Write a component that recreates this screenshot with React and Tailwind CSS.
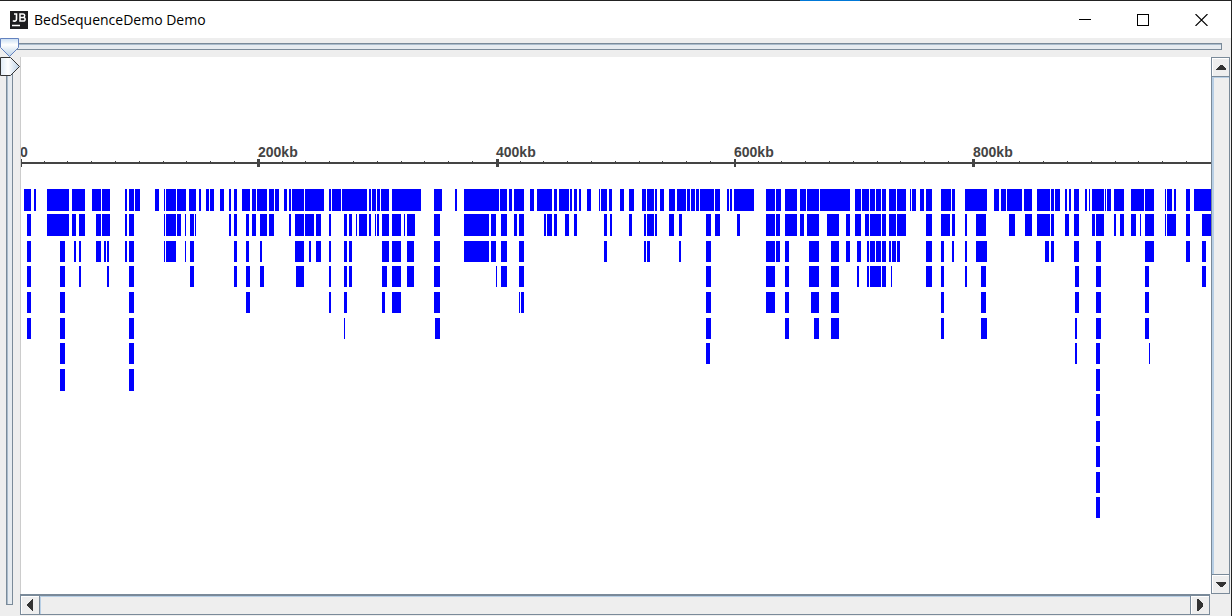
import React, { useState } from 'react'

// [start, end] of every feature, one list per packed row
const rows = [
  {
    y: 132, h: 22, spans: [
      [3, 10], [13, 15], [26, 48], [51, 64], [71, 80], [81, 89], [104, 106], [108, 113], [114, 119],
      [134, 138], [143, 144], [145, 155], [156, 165], [168, 175], [178, 180], [185, 188], [189, 193],
      [199, 203], [208, 210], [213, 216], [221, 229], [231, 235], [236, 246], [248, 253], [254, 258],
      [263, 266], [268, 270], [271, 283], [284, 303], [308, 310], [311, 320], [321, 346], [348, 350],
      [351, 355], [356, 359], [360, 368], [371, 400], [413, 421], [434, 436], [443, 478], [479, 486],
      [488, 491], [493, 503], [509, 513], [516, 531], [533, 536], [538, 548], [549, 551], [553, 556],
      [558, 560], [566, 570], [578, 579], [580, 586], [588, 591], [599, 603], [608, 613], [621, 625],
      [626, 633], [634, 636], [639, 643], [648, 654], [656, 665], [666, 669], [670, 674], [675, 678],
      [679, 693], [694, 699], [706, 708], [709, 711], [713, 733], [745, 754], [755, 760], [764, 776],
      [779, 785], [786, 798], [799, 829], [834, 840], [841, 848], [849, 854], [855, 860], [861, 865],
      [868, 875], [876, 885], [889, 890], [891, 895], [899, 903], [905, 911], [920, 930], [931, 934],
      [944, 966], [973, 978], [980, 985], [986, 1001], [1003, 1011], [1016, 1029], [1030, 1033],
      [1034, 1039], [1044, 1046], [1048, 1050], [1053, 1058], [1064, 1066], [1068, 1069], [1071, 1083],
      [1084, 1085], [1086, 1090], [1093, 1103], [1110, 1123], [1124, 1133], [1144, 1145], [1146, 1151],
      [1153, 1155], [1165, 1169], [1173, 1190]
    ]
  },
  {
    y: 157, h: 22, spans: [
      [6, 10], [26, 48], [51, 55], [58, 64], [75, 80], [81, 89], [104, 106], [108, 113], [143, 144],
      [145, 155], [156, 160], [164, 165], [169, 173], [174, 175], [208, 210], [213, 216], [225, 228],
      [231, 235], [239, 246], [248, 253], [268, 270], [274, 283], [284, 293], [295, 300], [308, 310],
      [323, 326], [328, 331], [335, 336], [338, 346], [348, 350], [354, 355], [356, 358], [361, 368],
      [371, 380], [383, 384], [386, 394], [413, 419], [443, 468], [470, 475], [480, 486], [493, 496],
      [498, 503], [523, 525], [526, 531], [533, 536], [544, 548], [553, 556], [583, 586], [589, 591],
      [608, 611], [623, 625], [626, 633], [634, 636], [648, 653], [658, 661], [685, 690], [694, 699],
      [716, 719], [745, 754], [755, 759], [764, 776], [779, 783], [786, 798], [806, 818], [825, 829],
      [834, 840], [844, 848], [849, 860], [861, 865], [868, 875], [876, 885], [905, 911], [920, 929],
      [931, 934], [944, 946], [955, 965], [988, 994], [1004, 1011], [1016, 1029], [1030, 1033],
      [1044, 1048], [1053, 1058], [1071, 1074], [1075, 1083], [1093, 1095], [1099, 1103], [1110, 1115],
      [1119, 1120], [1124, 1133], [1144, 1145], [1146, 1155], [1165, 1169], [1181, 1190]
    ]
  },
  {
    y: 184, h: 21, spans: [
      [6, 10], [39, 44], [53, 55], [58, 60], [75, 80], [83, 85], [86, 88], [104, 106], [108, 113],
      [143, 144], [145, 155], [164, 165], [169, 173], [213, 216], [225, 228], [239, 241], [274, 283],
      [288, 290], [295, 300], [308, 310], [323, 326], [328, 331], [361, 368], [371, 380], [386, 393],
      [413, 419], [443, 468], [470, 475], [480, 486], [498, 503], [583, 586], [623, 625], [626, 629],
      [658, 660], [685, 690], [745, 754], [755, 759], [764, 768], [788, 798], [810, 818], [825, 829],
      [836, 840], [846, 848], [849, 854], [855, 860], [861, 865], [868, 870], [871, 875], [876, 879],
      [905, 911], [920, 923], [931, 933], [944, 946], [955, 966], [1024, 1028], [1030, 1033],
      [1053, 1058], [1075, 1080], [1124, 1133], [1165, 1169], [1181, 1185]
    ]
  },
  {
    y: 209, h: 21, spans: [
      [6, 10], [39, 44], [58, 60], [86, 88], [108, 113], [169, 173], [213, 216], [225, 229], [239, 243],
      [275, 283], [308, 310], [323, 326], [328, 331], [361, 366], [371, 380], [386, 393], [413, 419],
      [475, 476], [480, 486], [498, 503], [685, 690], [745, 754], [764, 768], [788, 798], [810, 818],
      [836, 838], [846, 848], [849, 860], [861, 865], [870, 871], [905, 911], [920, 923], [944, 946],
      [960, 965], [1054, 1058], [1075, 1080], [1124, 1128], [1181, 1185]
    ]
  },
  {
    y: 235, h: 21, spans: [
      [6, 10], [39, 44], [108, 113], [225, 229], [308, 310], [323, 326], [361, 364], [371, 380],
      [413, 419], [498, 499], [500, 503], [685, 690], [745, 754], [764, 768], [790, 798], [810, 818],
      [920, 923], [960, 965], [1054, 1058], [1075, 1080], [1124, 1128]
    ]
  },
  {
    y: 261, h: 21, spans: [
      [6, 10], [39, 44], [108, 113], [323, 324], [414, 419], [685, 690], [764, 768], [793, 798],
      [810, 818], [920, 923], [960, 966], [1054, 1056], [1075, 1080], [1124, 1128]
    ]
  },
  { y: 286, h: 21, spans: [[39, 44], [108, 113], [685, 689], [1054, 1056], [1075, 1079], [1128, 1129]] },
  { y: 312, h: 22, spans: [[39, 44], [108, 113], [1075, 1079]] },
  { y: 337, h: 22, spans: [[1075, 1079]] },
  { y: 364, h: 21, spans: [[1075, 1079]] },
  { y: 389, h: 21, spans: [[1075, 1079]] },
  { y: 415, h: 21, spans: [[1075, 1079]] },
  { y: 440, h: 21, spans: [[1075, 1079]] }
]

const majorTicks = [
  { label: '0', x: 0, w: 1, textX: -1 },
  { label: '200kb', x: 236, w: 3, textX: 237 },
  { label: '400kb', x: 475, w: 3, textX: 475 },
  { label: '600kb', x: 713, w: 2, textX: 713 },
  { label: '800kb', x: 951, w: 3, textX: 952 }
]

const minorTicks = Array.from({ length: 49 }, (_, i) => Math.floor((i + 1) * 23.8 - 0.8))

const TitleBar = () => (
  <header className="flex h-[37px] shrink-0 items-center bg-white pl-[10px]">
    <svg width="18" height="18" viewBox="0 0 18 18" className="shrink-0" aria-hidden="true">
      <rect width="18" height="18" fill="#1c1c1e" />
      <path d="M3 9.5c.5 .8 3.5 1.2 3.5-1.2V3H4" fill="none" stroke="#fff" strokeWidth="1.6" />
      <path d="M10 3v7h3.2c2.6 0 2.6-3.6 0-3.6H10h3c2.2 0 2.2-3.4 0-3.4z" fill="none" stroke="#fff" strokeWidth="1.5" />
      <path d="M2 14.5h8" stroke="#fff" strokeWidth="1.5" />
    </svg>
    <h1 className="ml-1.5 flex-1 font-['Open_Sans','Noto_Sans',sans-serif] text-sm text-black">
      BedSequenceDemo Demo
    </h1>
    <button type="button" aria-label="Minimize" className="flex h-full w-[58px] items-center justify-center">
      <svg width="12" height="12" shapeRendering="crispEdges"><path d="M0 5.5h12" stroke="#000" /></svg>
    </button>
    <button type="button" aria-label="Maximize" className="flex h-full w-[58px] items-center justify-center">
      <svg width="12" height="12" shapeRendering="crispEdges"><rect x=".5" y=".5" width="11" height="11" fill="none" stroke="#000" /></svg>
    </button>
    <button type="button" aria-label="Close" className="flex h-full w-[59px] items-center justify-center">
      <svg width="13" height="12"><path d="M.5 0l12 12M12.5 0l-12 12" stroke="#000" strokeWidth="1.1" /></svg>
    </button>
  </header>
)

const HorizontalSlider = () => {
  const [value, setValue] = useState(0)
  return (
    <div className="relative flex h-[19px] shrink-0 items-start px-[9px] pt-[5px]">
      <div className="h-[7px] flex-1 border border-[#7a8a99] bg-[#e6ebf0] shadow-[inset_0_1px_0_#a9bbcb]" />
      <svg width="20" height="19" className="absolute top-0 left-0" aria-hidden="true">
        <defs>
          <linearGradient id="thumbDown" x1="0" y1="0" x2="0" y2="1">
            <stop offset="0" stopColor="#c8ddf2" />
            <stop offset=".35" stopColor="#fff" />
            <stop offset="1" stopColor="#b8cfe5" />
          </linearGradient>
        </defs>
        <path d="M.5 .5h18v9l-9 9l-9-9z" fill="url(#thumbDown)" stroke="#6382bf" />
      </svg>
      <input
        type="range"
        aria-label="Zoom horizontally"
        value={value}
        onChange={e => setValue(Number(e.target.value))}
        className="absolute inset-0 m-0 h-full w-full opacity-0"
      />
    </div>
  )
}

const VerticalSlider = () => {
  const [value, setValue] = useState(0)
  return (
    <div className="relative flex w-5 shrink-0 flex-col pt-[9px] pb-[11px] pl-[6px]">
      <div className="w-[7px] flex-1 border border-[#7a8a99] bg-[#e6ebf0] shadow-[inset_1px_0_0_#a9bbcb]" />
      <svg width="20" height="19" className="absolute top-0 left-0" aria-hidden="true">
        <defs>
          <linearGradient id="thumbRight" x1="0" y1="0" x2="1" y2="0">
            <stop offset="0" stopColor="#dfeaf5" />
            <stop offset=".4" stopColor="#fff" />
            <stop offset="1" stopColor="#b8cfe5" />
          </linearGradient>
        </defs>
        <path d="M.5 .5h10l9 9l-9 9h-10z" fill="url(#thumbRight)" stroke="#333" />
      </svg>
      <input
        type="range"
        aria-label="Zoom vertically"
        value={value}
        onChange={e => setValue(Number(e.target.value))}
        className="absolute inset-0 m-0 h-full w-full opacity-0 [writing-mode:vertical-lr]"
      />
    </div>
  )
}

const SequenceTrack = () => (
  <svg className="block h-full w-full overflow-hidden bg-white" shapeRendering="crispEdges">
    <rect x="0" y="105" width="100%" height="2" fill="#444" />
    {minorTicks.map(x => (
      <rect key={x} x={x} y="104" width="1" height="1" fill="#444" />
    ))}
    {majorTicks.map(tick => (
      <g key={tick.label} fill="#444">
        <rect x={tick.x} y="102" width={tick.w} height="8" />
        <text x={tick.textX} y="100" className="font-['Liberation_Sans',Arial,sans-serif] text-[14px] font-bold">
          {tick.label}
        </text>
      </g>
    ))}
    {rows.map(row => (
      <g key={row.y} fill="#0000ff">
        {row.spans.map(([start, end]) => (
          <rect key={start} x={start} y={row.y} width={end - start} height={row.h} />
        ))}
      </g>
    ))}
  </svg>
)

const VerticalScrollbar = () => (
  <div className="flex w-5 shrink-0 flex-col border-l border-[#7a8a99] bg-[#eee]">
    <button type="button" aria-label="Scroll up" className="flex h-[19px] w-[18px] items-center justify-center border-t border-r border-[#7a8a99] pl-px shadow-[inset_1px_1px_0_#fff]">
      <svg width="10" height="5" shapeRendering="crispEdges"><path d="M4 0h2l4 4v1H0V4z" fill="#333" /></svg>
    </button>
    <div className="w-[18px] flex-1 border-t border-r border-[#7a8a99] shadow-[inset_2px_1px_0_#b8cfe5]" />
    <button type="button" aria-label="Scroll down" className="flex h-5 w-[18px] items-center justify-center border-t border-r border-b border-[#7a8a99] pl-px shadow-[inset_1px_1px_0_#fff]">
      <svg width="10" height="5" shapeRendering="crispEdges"><path d="M0 0h10v1L6 5H4L0 1z" fill="#333" /></svg>
    </button>
  </div>
)

const HorizontalScrollbar = () => (
  <div className="flex h-[22px] min-w-0 flex-1 border-t-2 border-[#7a8a99] bg-[#eee]">
    <button type="button" aria-label="Scroll left" className="flex h-[19px] w-[19px] items-center justify-center border-b border-l border-[#7a8a99] shadow-[inset_1px_1px_0_#fff]">
      <svg width="6" height="12" shapeRendering="crispEdges"><path d="M6 0v12H5L0 7V5l5-5z" fill="#333" /></svg>
    </button>
    <div className="h-[19px] flex-1 border-b border-l border-[#7a8a99] shadow-[inset_1px_1px_0_#b8cfe5]" />
    <button type="button" aria-label="Scroll right" className="flex h-[19px] w-5 items-center justify-center border-r border-b border-l border-[#7a8a99] shadow-[inset_1px_1px_0_#fff]">
      <svg width="6" height="12" shapeRendering="crispEdges"><path d="M0 0v12h1l5-5V5L1 0z" fill="#333" /></svg>
    </button>
  </div>
)

const App = () => {
  return (
    <div className="flex h-screen flex-col border-r border-[#222] bg-[#eee]">
      {/* Window edge */}
      <div className="flex h-px shrink-0 bg-[#222]">
        <div className="ml-[65%] w-[60px] bg-[#0078d7]" />
      </div>
      <TitleBar />
      <HorizontalSlider />
      <div className="flex min-h-0 flex-1">
        <VerticalSlider />
        <div className="flex min-w-0 flex-1 flex-col">
          <div className="flex min-h-0 flex-1">
            <main className="min-w-0 flex-1 border-l border-[#ccc]">
              <SequenceTrack />
            </main>
            <VerticalScrollbar />
          </div>
          <div className="flex shrink-0">
            <HorizontalScrollbar />
            <div className="w-[21px] shrink-0" />
          </div>
        </div>
      </div>
    </div>
  )
}

export default App
